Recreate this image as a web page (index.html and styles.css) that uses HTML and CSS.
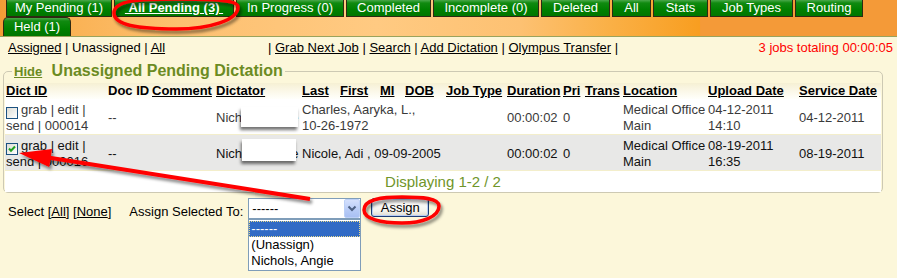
FILE: index.html
```html
<!DOCTYPE html>
<html>
<head>
<meta charset="utf-8">
<title>Pending Dictation</title>
<link rel="stylesheet" href="styles.css">
</head>
<body>
<div class="tabbar">
  <div class="tabrow">
    <a class="tab">My Pending (1)</a>
    <a class="tab current"><span>&nbsp;All Pending (3)&nbsp;</span></a>
    <a class="tab">In Progress (0)</a>
    <a class="tab">Completed</a>
    <a class="tab">Incomplete (0)</a>
    <a class="tab">Deleted</a>
    <a class="tab">All</a>
    <a class="tab">Stats</a>
    <a class="tab">Job Types</a>
    <a class="tab">Routing</a>
  </div>
  <div class="tabrow2">
    <a class="tab held">Held (1)</a>
  </div>
</div>

<div class="nav">
  <div class="nav-left"><a>Assigned</a> | Unassigned | <a>All</a></div>
  <div class="nav-mid">| <a>Grab Next Job</a> | <a>Search</a> | <a>Add Dictation</a> | <a>Olympus Transfer</a> |</div>
  <div class="nav-right">3 jobs totaling 00:00:05</div>
</div>

<fieldset class="panel">
  <legend><a class="hide">Hide</a> Unassigned Pending Dictation</legend>
  <table class="jobs">
    <colgroup>
      <col class="c-dict"><col class="c-doc"><col class="c-comment"><col class="c-dictator">
      <col class="c-last"><col class="c-first"><col class="c-mi"><col class="c-dob">
      <col class="c-jobtype"><col class="c-duration"><col class="c-pri"><col class="c-trans">
      <col class="c-location"><col class="c-upload"><col class="c-service">
    </colgroup>
    <thead>
      <tr>
        <th><a>Dict ID</a></th>
        <th>Doc ID</th>
        <th><a>Comment</a></th>
        <th><a>Dictator</a></th>
        <th><a>Last</a></th>
        <th><a>First</a></th>
        <th><a>MI</a></th>
        <th><a>DOB</a></th>
        <th><a>Job Type</a></th>
        <th><a>Duration</a></th>
        <th><a>Pri</a></th>
        <th><a>Trans</a></th>
        <th><a>Location</a></th>
        <th><a>Upload Date</a></th>
        <th><a>Service Date</a></th>
      </tr>
    </thead>
    <tbody>
      <tr class="row-a">
        <td><span class="cb"></span>grab | edit | send | 000014</td>
        <td>--</td>
        <td></td>
        <td class="dictator">Nichols, Angie<span class="redact r1"></span></td>
        <td colspan="4">Charles, Aaryka, L., <span class="nw">10-26-1972</span></td>
        <td></td>
        <td>00:00:02</td>
        <td>0</td>
        <td></td>
        <td>Medical Office Main</td>
        <td><span class="nw">04-12-2011</span> 14:10</td>
        <td>04-12-2011</td>
      </tr>
      <tr class="row-b">
        <td><span class="cb checked"><svg width="10" height="10" viewBox="0 0 10 10"><polyline points="2,4.5 4,6.8 8,2.5" fill="none" stroke="#21a121" stroke-width="2"/></svg></span>grab | edit | send | 000016</td>
        <td>--</td>
        <td></td>
        <td class="dictator">Nichols, Angie<span class="redact r2"></span></td>
        <td colspan="4">Nicole, Adi , <span class="nw">09-09-2005</span></td>
        <td></td>
        <td>00:00:02</td>
        <td>0</td>
        <td></td>
        <td>Medical Office Main</td>
        <td><span class="nw">08-19-2011</span> 16:35</td>
        <td>08-19-2011</td>
      </tr>
    </tbody>
  </table>
  <div class="pager">Displaying 1-2 / 2</div>
</fieldset>

<div class="controls">
  <span class="lbl">Select [<a>All</a>] [<a>None</a>]</span>
  <span class="lbl assign-lbl">Assign Selected To:</span>
  <div class="combo">
    <div class="combo-box">
      <span class="combo-val">------</span>
      <span class="combo-btn"><svg width="14" height="17" viewBox="0 0 14 17"><polyline points="3.5,6.5 7,10 10.5,6.5" fill="none" stroke="#4d6185" stroke-width="2"/></svg></span>
    </div>
    <ul class="combo-list">
      <li class="on">------</li>
      <li>(Unassign)</li>
      <li>Nichols, Angie</li>
    </ul>
  </div>
  <button class="xpbtn">Assign</button>
</div>

<svg class="annot" width="897" height="278" viewBox="0 0 897 278">
  <defs>
    <filter id="sh" x="-10%" y="-30%" width="130%" height="170%">
      <feDropShadow dx="2" dy="3" stdDeviation="1.6" flood-color="#000" flood-opacity="0.45"/>
    </filter>
  </defs>
  <g filter="url(#sh)">
    <path d="M114,13 C114,0 140,-1 176,-1 C205,-1 238,-1 238,7 C238,20 210,29 176,29 C142,29 114,26 114,13 Z" fill="none" stroke="#f00" stroke-width="3.5"/>
    <path d="M364,210 C364,199 382,197 402,197 C422,197 439,198 439,206 C439,217 422,223 402,223 C381,223 364,219 364,210 Z" fill="none" stroke="#f00" stroke-width="3.5"/>
    <line x1="310" y1="199" x2="48" y2="157.5" stroke="#f00" stroke-width="4"/>
    <polygon points="19,153 52,149 49.2,167" fill="#f00"/>
  </g>
</svg>
</body>
</html>
```

FILE: styles.css
```css
* {
  box-sizing: border-box;
}

html,
body {
  margin: 0;
  padding: 0;
}

body {
  position: relative;
  width: 897px;
  height: 278px;
  overflow: hidden;
  background: #fcf7da;
  font: 13px/16px "Liberation Sans", Arial, sans-serif;
  color: #000;
}

a {
  color: #000;
  text-decoration: underline;
}

.nw {
  white-space: nowrap;
}

/* ---------- tabs ---------- */
.tabbar {
  height: 37px;
  border-bottom: 1px solid #9aa35c;
  background: linear-gradient(to right, #f39c36 0%, #f9b050 6%, #fdc070 20%, #ffca82 42%, #fdc172 58%, #fab046 68%, #f89e20 78%, #f49a38 78.1%, #f49a38 100%);
}

.tabrow {
  display: flex;
  gap: 2px;
  padding-left: 6px;
  height: 17px;
}

.tab {
  display: block;
  height: 17px;
  border: 1px solid #2e2a12;
  border-top: 0;
  background: linear-gradient(#4aa84a 0, #108a10 3px, #008000 60%, #007600 100%);
  color: #fff;
  text-align: center;
  line-height: 16px;
  text-decoration: none;
  white-space: nowrap;
}

.tabrow .tab:nth-child(1) { width: 106px; }
.tabrow .tab:nth-child(2) { width: 120px; }
.tabrow .tab:nth-child(3) { width: 108px; }
.tabrow .tab:nth-child(4) { width: 85px; }
.tabrow .tab:nth-child(5) { width: 106px; }
.tabrow .tab:nth-child(6) { width: 69px; }
.tabrow .tab:nth-child(7) { width: 39px; }
.tabrow .tab:nth-child(8) { width: 55px; }
.tabrow .tab:nth-child(9) { width: 83px; }
.tabrow .tab:nth-child(10) { width: 68px; }

.tab.current {
  font-weight: bold;
}

.tab.current span {
  text-decoration: underline;
}

.tabrow2 {
  padding-left: 3px;
  height: 19px;
}

.tab.held {
  width: 68px;
  height: 19px;
  border-top: 1px solid #2e2a12;
  border-bottom: 0;
  border-radius: 5px 5px 0 0;
  padding-top: 1px;
}

/* ---------- nav line ---------- */
.nav {
  display: grid;
  grid-template-columns: 260px 1fr auto;
  padding: 3px 4px 0 8px;
  height: 19px;
}

.nav-right {
  color: #f00;
}

/* ---------- panel ---------- */
.panel {
  margin: 6px 14px 0 3px;
  padding: 2px 1px 0;
  border: 1px solid #cdc9b3;
  border-radius: 5px;
  min-width: 0;
}

.panel legend {
  margin-left: 7px;
  padding: 0 2px;
  font: bold 16px/18px "Liberation Sans", Arial, sans-serif;
  color: #6b8b22;
}

.panel legend .hide {
  font-size: 13px;
  color: #6b8b22;
  margin-right: 5px;
}

.jobs {
  width: 876px;
  table-layout: fixed;
  border-collapse: collapse;
  background: #fff;
}

.c-dict { width: 102px; }
.c-doc { width: 44px; }
.c-comment { width: 64px; }
.c-dictator { width: 86px; }
.c-last { width: 38px; }
.c-first { width: 40px; }
.c-mi { width: 25px; }
.c-dob { width: 41px; }
.c-jobtype { width: 61px; }
.c-duration { width: 56px; }
.c-pri { width: 22px; }
.c-trans { width: 38px; }
.c-location { width: 85px; }
.c-upload { width: 91px; }
.c-service { width: 83px; }

.jobs th {
  height: 16px;
  padding: 0 1px;
  line-height: 16px;
  text-align: left;
  font-weight: bold;
  white-space: nowrap;
  vertical-align: middle;
  background: linear-gradient(#f6f0d4, #fffffb);
}

.jobs td {
  padding: 3px 1px 0;
  line-height: 16px;
  vertical-align: middle;
  border-bottom: 1px solid #f3eecb;
}

.row-a td {
  color: #3a3a3a;
}

.row-b td {
  color: #111;
  background: #e8e8e7;
}

.jobs td.dictator {
  position: relative;
  white-space: nowrap;
}

.cb {
  display: inline-block;
  width: 12px;
  height: 12px;
  margin-right: 3px;
  margin-bottom: -3px;
  vertical-align: -2px;
  border: 1px solid #1c5180;
  background: linear-gradient(135deg, #dcdcd5, #ffffff);
}

.cb svg {
  display: block;
}

.redact {
  position: absolute;
  background: #fff;
  box-shadow: -1px 3px 3px rgba(0, 0, 0, 0.55);
}

.redact.r1 {
  left: 26px;
  top: 8px;
  width: 57px;
  height: 20px;
}

.redact.r2 {
  left: 27px;
  top: 4px;
  width: 54px;
  height: 22px;
}

.pager {
  height: 21px;
  padding-top: 1px;
  background: #fff;
  text-align: center;
  font-size: 15px;
  line-height: 20px;
  color: #6f952a;
}

/* ---------- bottom controls ---------- */
.controls {
  display: flex;
  align-items: flex-start;
  margin-top: 5px;
  padding-left: 8px;
}

.lbl {
  padding-top: 6px;
  white-space: nowrap;
}

.assign-lbl {
  margin-left: 18px;
}

.combo {
  position: relative;
  margin-left: 5px;
  width: 113px;
}

.combo-box {
  display: flex;
  height: 21px;
  border: 1px solid #7f9db9;
  background: #fff;
}

.combo-val {
  flex: 1;
  padding-left: 3px;
  line-height: 19px;
}

.combo-btn {
  width: 16px;
  height: 19px;
  border: 1px solid #bcd0f7;
  border-radius: 2px;
  background: linear-gradient(#d4e0fd, #b7cbf7 60%, #a9c0f3);
}

.combo-btn svg {
  display: block;
}

.combo-list {
  position: absolute;
  top: 100%;
  left: 0;
  width: 113px;
  margin: 0;
  padding: 1px 0;
  list-style: none;
  border: 1px solid #7f9db9;
  background: #fff;
}

.combo-list li {
  height: 16px;
  padding-left: 2px;
  line-height: 16px;
  white-space: nowrap;
}

.combo-list li.on {
  background: #316ac5;
  color: #fff;
  outline: 1px dotted #e8d88c;
  outline-offset: -1px;
}

.xpbtn {
  margin: 0 0 0 10px;
  width: 58px;
  height: 19px;
  padding: 0;
  border: 1px solid #1c3c74;
  border-radius: 3px;
  background: linear-gradient(#ffffff, #f4f3ee 70%, #dedbd0);
  box-shadow: inset 0 0 0 1px #b8cdf4;
  font: 13px/16px "Liberation Sans", Arial, sans-serif;
  color: #000;
}

/* ---------- annotations ---------- */
.annot {
  position: absolute;
  left: 0;
  top: 0;
  pointer-events: none;
}
```
